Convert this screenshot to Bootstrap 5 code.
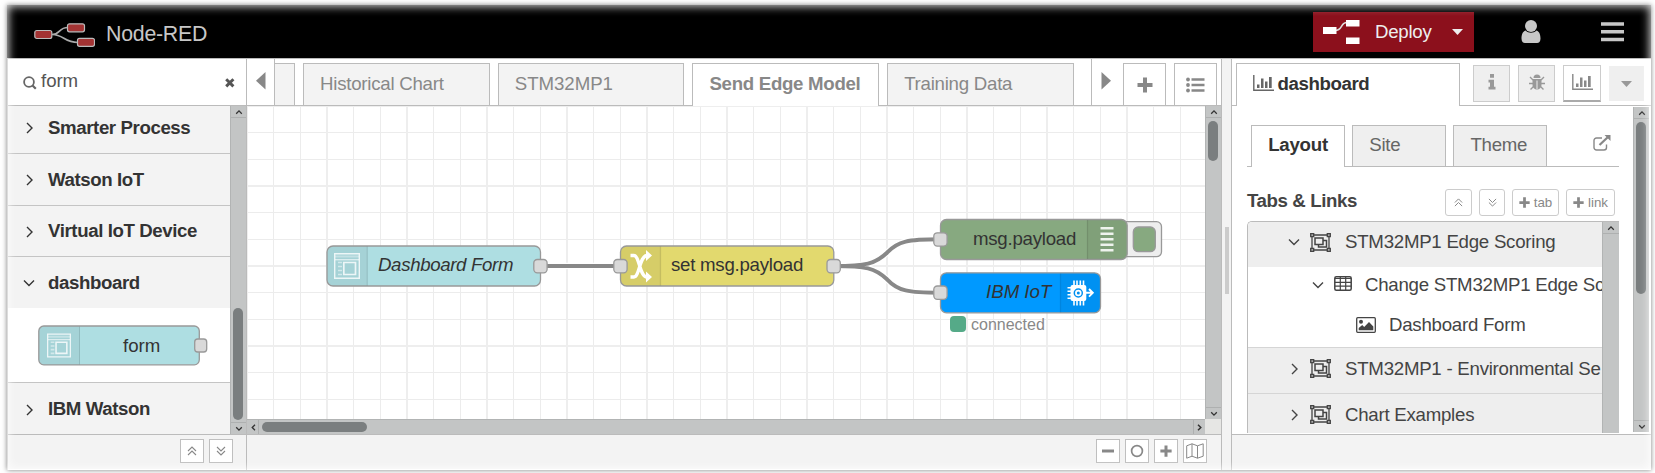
<!DOCTYPE html>
<html lang="en">
<head>
<meta charset="utf-8">
<title>Node-RED</title>
<link href="https://cdn.jsdelivr.net/npm/bootstrap@5.3.0/dist/css/bootstrap.min.css" rel="stylesheet">
<style>
body{font:18.67px/1.2 "Liberation Sans",Arial,sans-serif;letter-spacing:-.25px;color:#333;background:#fff;overflow:hidden;height:473px}
svg{display:block;flex:none}
.app-frame{margin:5px 0 0 7px;width:1644px;height:465px;box-shadow:0 0 5px rgba(0,0,0,.5)}
.app-frame::after{content:"";position:absolute;inset:0;box-shadow:inset 0 0 10px 1px rgba(255,255,255,.9);pointer-events:none;z-index:9}
.topbar{height:53px;background:#000;color:#c7c7c7}
.brand-name{font-size:21.33px;margin-left:11px;color:#c7c7c7}
.deploy{width:161px;height:40px;background:#8c101c;color:#eee;border-radius:0;margin-top:7px}
.shell{height:412px;border-top:1px solid #bbb}
.palette-col{width:240px;border-left:1px solid #bbb;border-right:1px solid #bbb}
.work-col{width:975px;border-right:1px solid #bbb}
.split-col{width:9px;background:#f3f3f3}
.split-grip{width:4px;height:67px;margin:168px 0 0 3px;background:#ccc}
.side-col{width:420px;border-left:1px solid #bbb}
.strip{height:47px;border-bottom:1px solid #bbb;flex:none}
.mid{height:328px}
.foot{height:35px;border-top:1px solid #bbb;background:#f3f3f3}
.search-box{color:#555}
.wide{letter-spacing:-.05px}
.cat{height:52px;border-bottom:1px solid #c4c4c4;background:#f3f3f3;font-weight:700;letter-spacing:-.4px;padding:1px 0 0 15px}
.cat span{margin-left:13px}
.vbar{width:16px;background:#c3c5c5;border-left:1px solid #b2b4b4;flex:none}
.vbar .cap{height:12px;border-color:#aeb0b0!important}
.thumb{background:#7a7e7f;border-radius:5px;width:10px;margin-left:2px}
.hbar{height:16px;background:#c3c5c5;border-top:1px solid #b2b4b4}
.hthumb{height:10px;width:105px;background:#7a7e7f;border-radius:5px}
.sq{width:24px;height:24px;border:1px solid #bfbfbf;background:#fff;color:#888;display:flex;align-items:center;justify-content:center}
.flowtab{height:42px;width:186.6px;margin-right:8.1px;border:1px solid #bbb;border-bottom:0;background:#f3f3f3;color:#888;padding:9.4px 0 0 16px;flex:none}
.flowtab.on{background:#fff;font-weight:700;height:43px;letter-spacing:-.3px}
.toolbtn{width:43px;height:42px;border:1px solid #bbb;border-bottom:0;color:#888}
.sidebtn{width:37px;height:37px;border:1px solid #ccc;background:#efefef;color:#999}
.intab{width:93.5px;height:41px;margin-right:7.6px;border:1px solid #bbb;border-bottom:0;background:#efefef;color:#666;padding:8.2px 0 0 16.2px}
.intab.on{background:#fff;color:#333;font-weight:700;height:42px}
.mini{height:27px;border:1px solid #ccc;border-radius:3px;color:#888;font-size:13.33px;letter-spacing:0}
.tree{width:372px;height:212px;border:1px solid #bbb;border-width:1px 0 0 1px;border-radius:5px 0 0 0;overflow:hidden;color:#444}
.tree .line{display:flex;align-items:center;white-space:nowrap;overflow:hidden}
.tree span{padding-top:1px}
.grp{background:#eee;box-sizing:border-box}
</style>
</head>
<body>
<svg width="0" height="0" class="position-absolute">
<defs>
<symbol id="right" viewBox="0 0 12 12"><path d="M4 1l5 5-5 5" fill="none" stroke="currentColor" stroke-width="1.4"/></symbol>
<symbol id="down" viewBox="0 0 12 12"><path d="M1 3.5l5 5 5-5" fill="none" stroke="currentColor" stroke-width="1.4"/></symbol>
<symbol id="sup" viewBox="0 0 8 6"><path d="M1.2 4.7L4 1.9l2.8 2.8" fill="none" stroke="#333" stroke-width="1.3"/></symbol>
<symbol id="sdown" viewBox="0 0 8 6"><path d="M1.2 1.3L4 4.1l2.8-2.8" fill="none" stroke="#333" stroke-width="1.3"/></symbol>
<symbol id="dup" viewBox="0 0 10 10"><path d="M1 5l4-4 4 4M1 9l4-4 4 4" fill="none" stroke="currentColor" stroke-width="1.1"/></symbol>
<symbol id="ddown" viewBox="0 0 10 10"><path d="M1 1l4 4 4-4M1 5l4 4 4-4" fill="none" stroke="currentColor" stroke-width="1.1"/></symbol>
<symbol id="plus" viewBox="0 0 16 16"><path d="M8 .5v15M.5 8h15" stroke="currentColor" stroke-width="4"/></symbol>
<symbol id="chart" viewBox="0 0 21 16"><path d="M.8 0v15.2H21" fill="none" stroke="currentColor" stroke-width="1.4"/><path d="M4 9.500h2.500V13H4zM8 3.500h2.500V13H8zM12 6.500h2.500V13H12zM16 2h2.700v11H16z" fill="currentColor"/></symbol>
<symbol id="group" viewBox="0 0 21 19"><g fill="none" stroke="currentColor" stroke-width="1.300"><path d="M2 2h17v15H2z"/><path d="M5 5h8v6.500H5zM13 7.500h3.500v6.500H8.500v-2.500" stroke-width="1.500"/><g fill="#aaa"><path d="M.7.700h3v3h-3zM17.300.700h3v3h-3zM.7 15.300h3v3h-3zM17.300 15.300h3v3h-3z"/></g></g></symbol>
<symbol id="formicon" viewBox="0 0 26 26"><g fill="none" stroke="#fff" stroke-opacity=".8"><path d="M.7.700h24.600v24.600H.7z" stroke-width="1.400"/><path d="M1 3.500h24" stroke-width="2" stroke-opacity=".35"/><path d="M1 6.700h24" stroke-width="1.400" stroke-opacity=".6"/><path d="M9.800 9.500h11.700v12H9.800z" stroke-width="1.700"/><path d="M4 9.500h4M4 13.500h4M4 17.500h4M4 21.500h4" stroke-width="1.700" stroke-opacity=".5"/></g></symbol>
</defs>
</svg>

<div class="app-frame position-relative">
<header class="topbar d-flex align-items-start">
  <div class="d-flex align-items-center" style="padding:17px 0 0 27px">
    <svg width="61" height="24" viewBox="0 0 61 24"><g fill="none" stroke="#aaa" stroke-width="1.600"><path d="M18 11.500c9 0 6-7 16-7M18 11.500c12 0 12 8 26 8"/></g><g fill="#a33333" stroke="#bbb" stroke-width="1.200"><rect x=".8" y="7.500" width="17" height="8" rx="2"/><rect x="33.500" y=".8" width="17" height="8" rx="2"/><rect x="43.500" y="15.300" width="17" height="8" rx="2"/></g></svg>
    <span class="brand-name">Node-RED</span>
  </div>
  <div class="deploy d-flex align-items-center ms-auto" style="padding-left:10px">
    <svg width="37" height="26" viewBox="0 0 37 26"><path d="M12 11.500c8 0 5-8 12-8" fill="none" stroke="#ddd" stroke-width="1.600"/><path fill="#fff" d="M0 8h13.500v7H0zM23 1h13.500v6.500H23zM23 18.500h13.500V25H23z"/></svg>
    <span style="margin-left:15px;width:57px">Deploy</span>
    <svg width="12" height="7" style="margin-left:20px"><path d="M0 0h11L5.500 6z" fill="#eee"/></svg>
  </div>
  <svg width="20" height="24" viewBox="0 0 20 24" style="margin:15px 60px 0 47px" fill="#c7c7c7"><circle cx="10" cy="6" r="6"/><path d="M4.500 10.500c3 3 8 3 11 0 3 1 4 4.500 4 8 0 3-1.500 4.500-3.500 4.500H4c-2 0-3.500-1.500-3.500-4.500 0-3.500 1-7 4-8z"/></svg>
  <svg width="23" height="20" style="margin:17px 27px 0 0"><path d="M0 2h23M0 9.800h23M0 17.500h23" stroke="#c7c7c7" stroke-width="3.600"/></svg>
</header>

<div class="shell d-flex">
  <aside class="palette-col d-flex flex-column">
    <div class="strip search-box d-flex align-items-center">
      <svg width="14" height="14" style="margin:2px 5px 0 15px"><circle cx="6" cy="6" r="4.900" fill="none" stroke="#666" stroke-width="1.800"/><path d="M9.300 9.300l3.500 3.500" stroke="#666" stroke-width="2.200"/></svg>
      <span class="wide" style="margin:-2px 0 0 -1px">form</span>
      <svg width="10" height="10" class="ms-auto" style="margin:2px 11px 0 0"><path d="M1.200 1.200l7.200 7.200M8.400 1.200L1.200 8.400" stroke="#555" stroke-width="2.900"/></svg>
    </div>
    <div class="mid d-flex overflow-hidden">
      <div class="flex-grow-1">
        <div class="cat d-flex align-items-center" style="height:48px;padding-bottom:4px"><svg width="12" height="12"><use href="#right"/></svg><span>Smarter Process</span></div>
        <div class="cat d-flex align-items-center"><svg width="12" height="12"><use href="#right"/></svg><span>Watson IoT</span></div>
        <div class="cat d-flex align-items-center" style="height:51px"><svg width="12" height="12"><use href="#right"/></svg><span>Virtual IoT Device</span></div>
        <div class="cat d-flex align-items-center border-0" style="height:51px"><svg width="12" height="12"><use href="#down"/></svg><span>dashboard</span></div>
        <div style="height:75px;border-bottom:1px solid #c4c4c4;padding:17px 0 0 30px">
          <svg width="170" height="42" font-size="18.670"><rect x=".8" y="1" width="160.500" height="38.800" rx="5" fill="#aedee2"/><path d="M41 1H6a5 5 0 0 0-5 5v29a5 5 0 0 0 5 5h35z" fill="#a5d3d7"/><path d="M41.500 1v39" stroke="#90bbbf"/><rect x=".8" y="1" width="160.500" height="38.800" rx="5" fill="none" stroke="#999" stroke-width="1.300"/><use href="#formicon" x="9" y="7.500" width="24" height="26"/><text x="85" y="26.500" fill="#333" letter-spacing="0">form</text><rect x="156.700" y="14" width="12" height="13" rx="3" fill="#d9d9d9" stroke="#999" stroke-width="1.300"/></svg>
        </div>
        <div class="cat d-flex align-items-center border-0"><svg width="12" height="12"><use href="#right"/></svg><span>IBM Watson</span></div>
      </div>
      <div class="vbar d-flex flex-column">
        <div class="cap border-bottom d-flex justify-content-center align-items-center"><svg width="8" height="6"><use href="#sup"/></svg></div>
        <div class="thumb" style="margin-top:190px;height:112px"></div>
        <div class="cap border-top mt-auto d-flex justify-content-center align-items-center"><svg width="8" height="6"><use href="#sdown"/></svg></div>
      </div>
    </div>
    <div class="foot d-flex justify-content-end" style="padding:4px 13px 0 0;gap:5px">
      <div class="sq"><svg width="10" height="10"><use href="#dup"/></svg></div><div class="sq"><svg width="10" height="10"><use href="#ddown"/></svg></div>
    </div>
  </aside>

  <main class="work-col d-flex flex-column">
    <div class="strip d-flex align-items-start">
      <div class="h-100 border-end" style="width:28px;border-color:#bbb!important"><svg width="10" height="18" style="margin:13px 0 0 9px"><path d="M9.500 0v17.500L0 8.800z" fill="#888"/></svg></div>
      <div class="d-flex overflow-hidden" style="width:816px;padding-top:4px;height:47px">
        <div class="flowtab" style="width:20px;border-left:0;padding:0"></div>
        <div class="flowtab">Historical Chart</div><div class="flowtab wide">STM32MP1</div><div class="flowtab on">Send Edge Model</div><div class="flowtab">Training Data</div>
      </div>
      <div class="h-100 border-start" style="width:32px;border-color:#bbb!important"><svg width="10" height="18" style="margin:13px 0 0 9px"><path d="M.5 0v17.500L10 8.800z" fill="#888"/></svg></div>
      <div class="toolbtn d-flex align-items-center justify-content-center" style="margin:4px 8px 0 0"><svg width="16" height="16"><use href="#plus"/></svg></div>
      <div class="toolbtn d-flex align-items-center justify-content-center mt-1"><svg width="19" height="16"><path d="M5.500 2.500h13M5.500 8h13M5.500 13.500h13" stroke="#888" stroke-width="2.500"/><g fill="#888"><circle cx="2" cy="2.500" r="1.900"/><circle cx="2" cy="8" r="1.900"/><circle cx="2" cy="13.500" r="1.900"/></g></svg></div>
    </div>
    <div class="mid d-flex flex-column">
      <div class="d-flex" style="height:313px">
        <svg width="958" height="313" viewBox="247 106 958 313" font-size="18.670">
          <defs>
            <pattern id="grid" x="247" y="106" width="80" height="80" patternUnits="userSpaceOnUse"><path d="M26.500 0v80M53.500 0v80M0 26.500h80M0 53.500h80" stroke="#ececec" fill="none"/><path d="M0 0v80M80 0v80M0 0h80M0 80h80" stroke="#eee" stroke-width="2"/></pattern>
          </defs>
          <rect x="247" y="106" width="958" height="313" fill="url(#grid)"/>
          <g fill="none" stroke="#fff" stroke-width="6.500"><path d="M540 266h80M834 266C866 266 875 264 887 252.700C898 241 908 239.300 940 239.300M834 266C866 266 875 268 887 279.300C898 291 908 292.700 940 292.700"/></g>
          <g fill="none" stroke="#888" stroke-width="4"><path d="M540 266h80M834 266C866 266 875 264 887 252.700C898 241 908 239.300 940 239.300M834 266C866 266 875 268 887 279.300C898 291 908 292.700 940 292.700"/></g>
          <g stroke="#999" stroke-width="1.300">
            <rect x="1110" y="221.700" width="51.500" height="35" rx="5" fill="#eee"/><rect x="1133.300" y="227" width="22" height="24.700" rx="5" fill="#87a980"/>
            <rect x="327" y="246" width="213.500" height="40" rx="6" fill="#aedee2"/>
            <rect x="620.500" y="246" width="213.300" height="40" rx="6" fill="#e2d96e"/>
            <rect x="940.500" y="219.500" width="186.700" height="40" rx="6" fill="#87a980"/>
            <rect x="940.500" y="272.800" width="160" height="40" rx="6" fill="#09f"/>
          </g>
          <g fill="#000" fill-opacity=".05"><path d="M367.300 246.600H333a5.500 5.500 0 0 0-5.500 5.500v28a5.500 5.500 0 0 0 5.500 5.500h34.300zM660.500 246.600h-34a5.500 5.500 0 0 0-5.500 5.500v28a5.500 5.500 0 0 0 5.500 5.500h34zM1087 220h34a5.500 5.500 0 0 1 5.500 5.500v28a5.500 5.500 0 0 1-5.500 5.500h-34zM1060.500 273.500h34a5.500 5.500 0 0 1 5.500 5.500v28a5.500 5.500 0 0 1-5.500 5.500h-34z"/></g>
          <path d="M367.300 246.500v39M660.500 246.500v39M1087.500 220v39M1060.500 273.500v39" stroke="#000" stroke-opacity=".1" stroke-width="1.300"/>
          <use href="#formicon" x="334" y="253" width="26" height="26"/>
          <g fill="none" stroke="#fff" stroke-width="3.300"><path d="M630.500 255.500h3.500c5.500 0 5.500 21.500 13 21.500M630.500 277h3.500c5.500 0 5.500-21.500 13-21.500"/></g><path d="M646 250l6 5.500-6 5.500zM646 271.500l6 5.500-6 5.500z" fill="#fff"/>
          <path d="M1100.500 228.300h13M1100.500 233.700h13M1100.500 239.200h13M1100.500 244.700h13M1100.500 250.200h13" stroke="#fff" stroke-opacity=".87" stroke-width="2.400"/>
          <g stroke="#fff" fill="none" stroke-width="1.600"><path d="M1074 280.500v25M1077 280.500v25M1080.300 280.500v25M1083.500 280.500v25M1067.500 287.700h8M1067.500 291.200h8M1067.500 294.700h8M1067.500 298.200h8"/><path d="M1086 292.800h6.500M1089 289l3.800 3.800-3.800 3.800" stroke-width="1.900"/></g><rect x="1070.500" y="285" width="15.800" height="16" rx="2" fill="#fff"/><circle cx="1078.300" cy="293" r="4" fill="none" stroke="#0090f0" stroke-width="1.500"/><circle cx="1078.300" cy="293" r="1.500" fill="#0090f0"/>
          <g fill="#d9d9d9" stroke="#999" stroke-width="1.300"><rect x="533.800" y="259.500" width="13.300" height="13.300" rx="3.500"/><rect x="613.800" y="259.500" width="13.300" height="13.300" rx="3.500"/><rect x="827" y="259.500" width="13.300" height="13.300" rx="3.500"/><rect x="933.800" y="232.800" width="13.300" height="13.300" rx="3.500"/><rect x="933.800" y="286" width="13.300" height="13.300" rx="3.500"/></g>
          <g fill="#333"><text x="378" y="271" font-style="italic" letter-spacing="-.35">Dashboard Form</text><text x="671" y="271">set msg.payload</text><text x="973" y="245">msg.payload</text><text x="986" y="298" font-style="italic" letter-spacing="0">IBM IoT</text></g>
          <rect x="950" y="316" width="16" height="16" rx="4" fill="#5a8"/><text x="971" y="330" font-size="16" fill="#888" letter-spacing="0">connected</text>
        </svg>
        <div class="vbar d-flex flex-column">
          <div class="cap border-bottom d-flex justify-content-center align-items-center"><svg width="8" height="6"><use href="#sup"/></svg></div>
          <div class="thumb" style="margin-top:3px;height:40px"></div>
          <div class="cap border-top mt-auto d-flex justify-content-center align-items-center"><svg width="8" height="6"><use href="#sdown"/></svg></div>
        </div>
      </div>
      <div class="d-flex">
        <div class="hbar d-flex align-items-center" style="width:958px">
          <svg width="12" height="15" style="border-right:1px solid #aeb0b0"><path d="M8 4.700L5.200 7.500 8 10.300" fill="none" stroke="#333" stroke-width="1.300"/></svg>
          <div class="hthumb" style="margin:-1px 0 0 3px"></div>
          <svg width="12" height="15" class="ms-auto" style="border-left:1px solid #aeb0b0"><path d="M4 4.700l2.800 2.800L4 10.300" fill="none" stroke="#333" stroke-width="1.500"/></svg>
        </div>
        <div style="width:16px;background:#e6e6e4"></div>
      </div>
    </div>
    <div class="foot d-flex justify-content-end" style="padding:4px 14px 0 0;gap:5px">
      <div class="sq"><svg width="12" height="12"><path d="M0 6h12" stroke="#888" stroke-width="3"/></svg></div>
      <div class="sq"><svg width="14" height="14"><circle cx="7" cy="7" r="5.400" fill="none" stroke="#888" stroke-width="1.700"/></svg></div>
      <div class="sq"><svg width="12" height="12"><use href="#plus"/></svg></div>
      <div class="sq"><svg width="18" height="16"><path d="M.7 2.800L6 .8l5.500 2 5.700-2v12.400l-5.700 2-5.500-2-5.300 2zM6 .8v12.400M11.500 2.800v12.400" fill="none" stroke="#888"/></svg></div>
    </div>
  </main>

  <div class="split-col"><div class="split-grip"></div></div>

  <aside class="side-col d-flex flex-column">
    <div class="strip d-flex align-items-start">
      <div class="d-flex align-items-start fw-bold bg-white" style="margin:4px 0 0 4px;width:224px;height:43px;border:1px solid #bbb;border-bottom:0;padding:9.400px 0 0 16px;letter-spacing:-.4px"><svg width="21" height="16" style="margin:2px 3.500px 0 0" color="#666"><use href="#chart"/></svg>dashboard</div>
      <div class="d-flex" style="margin:6px 0 0 13px;gap:8px">
        <div class="sidebtn d-flex align-items-center justify-content-center"><svg width="8" height="16" style="margin-top:-4px"><path d="M2 0h4v3.800H2zM.5 5.800H6v7h1.500v2.700H.5v-2.700H2V8.400H.5z" fill="#999"/></svg></div>
        <div class="sidebtn d-flex align-items-center justify-content-center"><svg width="16" height="17" viewBox="0 0 16 17" style="margin-top:-3px"><path d="M4.500 4a3.500 3.500 0 0 1 7 0z" fill="#999"/><path d="M3.500 5h9v6a4.500 4.500 0 0 1-9 0z" fill="#999"/><path d="M4 6L1 3M12 6l3-3M4 9.500H0M12 9.500h4M4.500 12.500l-3 3M11.500 12.500l3 3" stroke="#999" stroke-width="1.400"/><path d="M8 6.500V15" stroke="#efefef"/></svg></div>
        <div class="sidebtn bg-white d-flex align-items-center justify-content-center" style="width:38px;border-bottom:2px solid #aaa"><svg width="21" height="16" style="margin-top:-2px" color="#888"><use href="#chart"/></svg></div>
        <div class="sidebtn border-0 d-flex align-items-center justify-content-center" style="width:35px;height:35px;margin-top:1px"><svg width="11" height="6"><path d="M0 0h11L5.500 6z" fill="#999"/></svg></div>
      </div>
    </div>
    <div class="mid d-flex" style="padding-top:1px">
      <div style="width:387px;margin-right:14px;height:326px;overflow:hidden;padding-left:15px">
        <div class="d-flex align-items-start" style="height:60px;border-bottom:1px solid #bbb;padding:18px 0 0 4px">
          <div class="intab on">Layout</div><div class="intab">Site</div><div class="intab">Theme</div>
          <svg width="18" height="16" class="ms-auto" style="margin:10px 8px 0 0"><path d="M9 3H3.500A2.500 2.500 0 0 0 1 5.500v7A2.500 2.500 0 0 0 3.500 15h7.500a2.500 2.500 0 0 0 2.500-2.500V9.500" fill="none" stroke="#888" stroke-width="1.400"/><path d="M6.500 10L15 2" stroke="#888" stroke-width="2.200"/><path d="M11.500 0H17.500v6z" fill="#888"/></svg>
        </div>
        <div class="d-flex align-items-start" style="height:54px;padding:17px 4px 0 0">
          <b style="color:#444;padding:6px 0 0;letter-spacing:-.4px">Tabs &amp; Links</b>
          <div class="d-flex ms-auto" style="gap:7px;padding-top:5px">
            <div class="mini d-flex align-items-center justify-content-center" style="width:27px"><svg width="9" height="9"><use href="#dup"/></svg></div>
            <div class="mini d-flex align-items-center justify-content-center" style="width:26px"><svg width="9" height="9"><use href="#ddown"/></svg></div>
            <div class="mini d-flex align-items-center justify-content-center" style="width:47px"><svg width="11" height="11" class="me-1"><use href="#plus"/></svg>tab</div>
            <div class="mini d-flex align-items-center justify-content-center" style="width:49px"><svg width="11" height="11" class="me-1"><use href="#plus"/></svg>link</div>
          </div>
        </div>
        <div class="tree d-flex">
          <div class="overflow-hidden" style="width:354px">
            <div class="line grp" style="height:45px;padding:0 0 5px 40px"><svg width="12" height="12"><use href="#down"/></svg><svg width="21" height="19" style="margin:0 14px 0 10px"><use href="#group"/></svg><span>STM32MP1 Edge Scoring</span></div>
            <div class="line" style="height:40px;padding:0 0 5px 64px"><svg width="12" height="12"><use href="#down"/></svg><svg width="18" height="15" style="margin:-2px 13px 0 10px"><rect x=".8" y=".8" width="16.400" height="13.400" rx="1.500" fill="none" stroke="#444" stroke-width="1.500"/><path d="M1 2.500h16M1 6.300h16M1 10.200h16M6.300 1v13M11.700 1v13" stroke="#444" stroke-width="1.200"/></svg><span>Change STM32MP1 Edge Sc</span></div>
            <div class="line" style="height:40px;padding:0 0 4px 108px"><svg width="20" height="16" style="margin:-1px 13px 0 0"><rect x=".7" y=".7" width="18.600" height="14.600" rx="1" fill="none" stroke="#444" stroke-width="1.300"/><circle cx="5" cy="4.700" r="2" fill="#444"/><path d="M2.700 13.300V11l3.500-3 2 2L13 5l4.300 4.500v3.800z" fill="#444"/></svg><span>Dashboard Form</span></div>
            <div class="line grp" style="height:46px;border-top:1px solid #d5d5d5;padding:0 0 4px 40px"><svg width="12" height="12"><use href="#right"/></svg><svg width="21" height="19" style="margin:0 14px 0 10px"><use href="#group"/></svg><span>STM32MP1 - Environmental Se</span></div>
            <div class="line grp" style="height:46px;border-top:1px solid #d5d5d5;padding:0 0 4px 40px"><svg width="12" height="12"><use href="#right"/></svg><svg width="21" height="19" style="margin:0 14px 0 10px"><use href="#group"/></svg><span>Chart Examples</span></div>
          </div>
          <div class="vbar" style="width:17px"><div class="cap border-bottom d-flex justify-content-center align-items-center"><svg width="8" height="6"><use href="#sup"/></svg></div></div>
        </div>
      </div>
      <div class="vbar d-flex flex-column" style="height:325px">
        <div class="cap border-bottom d-flex justify-content-center align-items-center"><svg width="8" height="6"><use href="#sup"/></svg></div>
        <div class="thumb" style="margin-top:3px;height:172px"></div>
        <div class="cap border-top mt-auto d-flex justify-content-center align-items-center"><svg width="8" height="6"><use href="#sdown"/></svg></div>
      </div>
    </div>
    <div class="foot"></div>
  </aside>
</div>
</div>
<script src="https://cdn.jsdelivr.net/npm/bootstrap@5.3.0/dist/js/bootstrap.bundle.min.js"></script>
</body>
</html>
